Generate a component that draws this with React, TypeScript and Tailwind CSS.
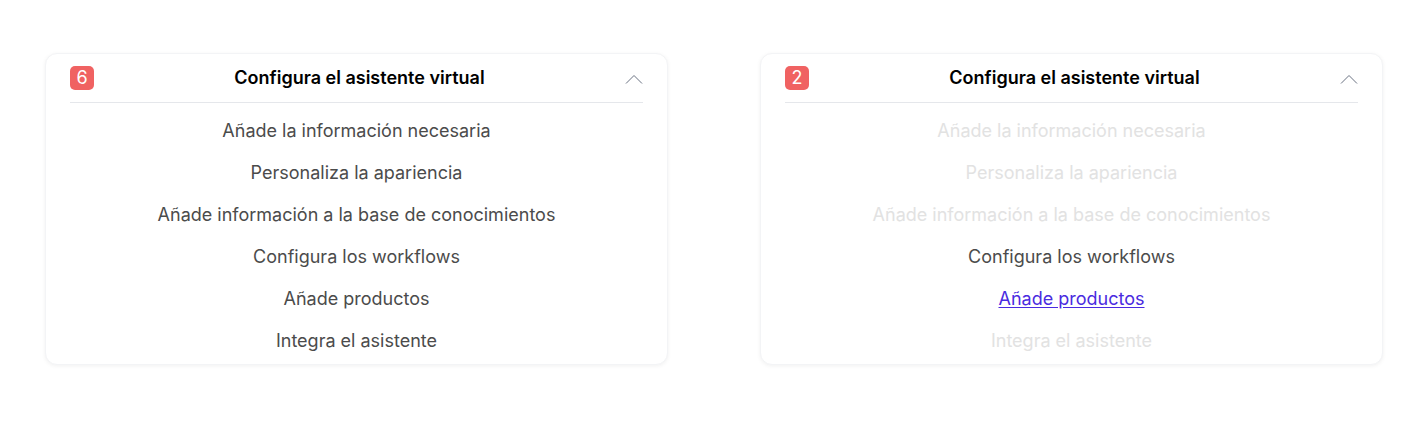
type Step = { label: string; state: 'normal' | 'muted' | 'link' };

const labels = [
  'Añade la información necesaria',
  'Personaliza la apariencia',
  'Añade información a la base de conocimientos',
  'Configura los workflows',
  'Añade productos',
  'Integra el asistente',
];

function SetupCard({ count, steps }: { count: number; steps: Step[] }) {
  return (
    <div className="flex-1 rounded-xl border border-gray-100 bg-white px-6 pt-3 pb-[2px] shadow-[0_1px_4px_rgba(0,0,0,0.06)]">
      {/* cabecera */}
      <div className="flex h-[37px] items-start justify-between border-b border-gray-200">
        <span className="flex h-6 w-6 items-center justify-center rounded-[5px] bg-[#f06262] text-[18px] leading-none text-white">
          {count}
        </span>
        <h2 className="text-lg leading-6 font-semibold text-black">Configura el asistente virtual</h2>
        <svg width="18" height="24" viewBox="0 0 18 24" fill="none" className="text-gray-500">
          <path d="M1 17.5 9 9.5l8 8" stroke="currentColor" strokeWidth="1" />
        </svg>
      </div>

      {/* pasos */}
      <ul className="flex flex-col pt-[7px]">
        {steps.map((s) => (
          <li key={s.label} className="py-[9px] text-center text-lg leading-6">
            {s.state === 'link' ? (
              <a href="#" className="text-[#4a2be0] underline underline-offset-2">
                {s.label}
              </a>
            ) : (
              <span className={s.state === 'muted' ? 'text-[#e2e2e2]' : 'text-[#4b4b4b]'}>{s.label}</span>
            )}
          </li>
        ))}
      </ul>
    </div>
  );
}

export default function App() {
  const first: Step[] = labels.map((label) => ({ label, state: 'normal' }));
  const second: Step[] = labels.map((label, i) => ({
    label,
    state: i === 3 ? 'normal' : i === 4 ? 'link' : 'muted',
  }));

  return (
    <div className="flex min-h-[432px] w-full items-start gap-[92px] bg-white px-[45px] pt-[53px] font-['Inter',sans-serif]">
      <SetupCard count={6} steps={first} />
      <SetupCard count={2} steps={second} />
    </div>
  );
}
